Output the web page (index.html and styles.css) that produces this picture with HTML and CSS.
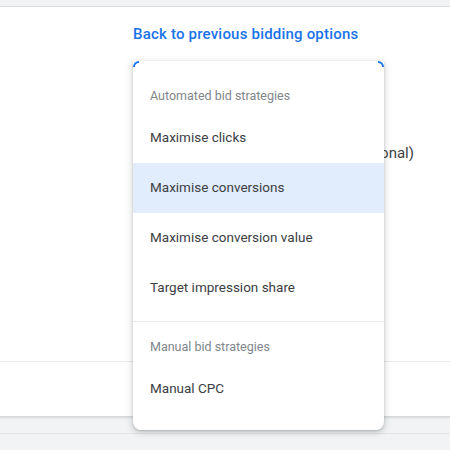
FILE: index.html
```html
<!DOCTYPE html>
<html>
<head>
<meta charset="utf-8">
<link rel="stylesheet" href="styles.css">
</head>
<body>
<div class="page">
  <div class="topband"></div>
  <div class="card">
    <div class="section main">
      <div class="link-row"><a class="back-link">Back to previous bidding options</a></div>
      <div class="field">
        <div class="menu">
          <div class="group">
            <div class="group-label">Automated bid strategies</div>
            <div class="item">Maximise clicks</div>
            <div class="item active">Maximise conversions</div>
            <div class="item">Maximise conversion value</div>
            <div class="item">Target impression share</div>
          </div>
          <div class="divider"></div>
          <div class="group last">
            <div class="group-label">Manual bid strategies</div>
            <div class="item">Manual CPC</div>
          </div>
        </div>
      </div>
      <div class="optional-row"><span>Target CPA (optional)</span></div>
    </div>
    <div class="section footer"></div>
  </div>
  <div class="gap"></div>
  <div class="gap2"></div>
</div>
</body>
</html>
```
FILE: styles.css
```css
html, body {
  margin: 0;
  padding: 0;
}
body {
  background: #f1f3f4;
  font-family: Roboto, "Liberation Sans", Arial, sans-serif;
  color: #3c4043;
}
.page {
  width: 450px;
  height: 450px;
  overflow: hidden;
  display: flex;
  flex-direction: column;
}
.topband {
  height: 6px;
  background: #f1f3f4;
  border-bottom: 1px solid #dadce0;
  flex-shrink: 0;
}
.card {
  background: #fff;
  border-bottom: 1px solid #d5d7da;
  box-shadow: 0 1px 2px rgba(60, 64, 67, 0.15);
  flex-shrink: 0;
}
.section.main {
  height: 355px;
  box-sizing: border-box;
  border-bottom: 1px solid #e8eaed;
  padding: 17px 0 0 133px;
  display: flex;
  flex-direction: column;
}
.section.footer {
  height: 54px;
}
.link-row {
  line-height: 20px;
  height: 20px;
}
.back-link {
  color: #1a73e8;
  font-size: 15px;
  font-weight: 500;
  letter-spacing: 0.2px;
}
.field {
  position: relative;
  margin-top: 17px;
  width: 251px;
  height: 0;
}
.menu {
  position: absolute;
  top: 0;
  left: 0;
  width: 251px;
  background: #fff;
  border-radius: 0 0 8px 8px;
  box-shadow: 0 2px 6px 1px rgba(60, 64, 67, 0.22), 0 1px 2px rgba(60, 64, 67, 0.2);
  padding-top: 9px;
  z-index: 2;
}
.menu::before,
.menu::after {
  content: "";
  position: absolute;
  top: 0;
  width: 6px;
  height: 6px;
  border-top: 2px solid #1a73e8;
  box-sizing: border-box;
}
.menu::before {
  left: 0;
  border-left: 2px solid #1a73e8;
  border-top-left-radius: 6px;
}
.menu::after {
  right: 0;
  border-right: 2px solid #1a73e8;
  border-top-right-radius: 6px;
}
.group {
  padding-bottom: 8px;
}
.group.last {
  padding-bottom: 16px;
}
.group-label {
  font-size: 12.5px;
  color: #80868b;
  line-height: 18px;
  padding: 16px 17px 8px;
}
.menu > .group:first-child .group-label {
  padding-top: 17px;
}
.item {
  height: 50px;
  line-height: 48px;
  padding: 0 17px 2px;
  box-sizing: border-box;
  font-size: 13.5px;
  color: #3c4043;
}
.item.active {
  background: #e1ecfc;
}
.divider {
  height: 1px;
  background: #e8eaed;
}
.optional-row {
  margin-top: 82px;
  margin-right: 36px;
  display: flex;
  justify-content: flex-end;
  font-size: 15px;
  line-height: 20px;
  color: #3c4043;
}
.gap {
  height: 16px;
  border-bottom: 1px solid #e3e5e8;
  flex-shrink: 0;
}
.gap2 {
  flex: 1;
}
```
